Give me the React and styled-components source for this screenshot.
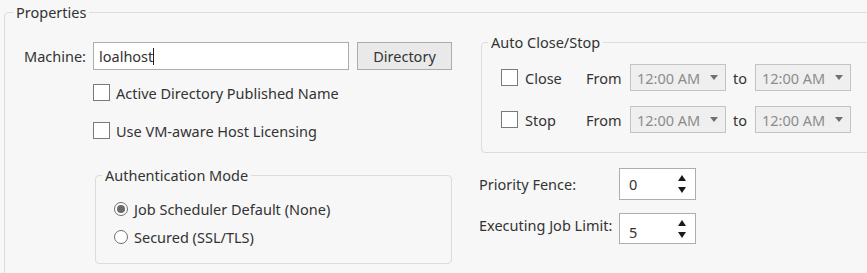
import React from 'react';
import styled, { createGlobalStyle } from 'styled-components';

const GlobalStyle = createGlobalStyle`
body {
  margin: 0;
  background: #f7f7f7;
  font-family: "Noto Sans", "Open Sans", sans-serif;
  font-size: 14.5px;
  color: #333;
  overflow: hidden;
}
`

const Page = styled.div`
  width: 867px;
  height: 273px;
  overflow: hidden;
  padding-top: 3px;
  box-sizing: border-box;
`

const Group = styled.fieldset`
  margin: ${p => p.margin || '0'};
  padding: ${p => p.pad || '0'};
  width: ${p => p.width || 'auto'};
  height: ${p => p.height || 'auto'};
  border: 1px solid #dcdcdc;
  border-radius: 4px;
  box-sizing: border-box;
  min-width: 0;
`

const Legend = styled.legend`
  margin-left: ${p => p.offset || 8}px;
  padding: 0 3px;
  line-height: 18px;
  color: #333;
`

const Columns = styled.div`
  display: flex;
`

const LeftCol = styled.div`
  width: 476px;
  padding-left: 19px;
  box-sizing: border-box;
`

const RightCol = styled.div`
  flex: 1;
  padding-top: 12px;
`

const MachineRow = styled.div`
  display: flex;
  align-items: center;
  margin-top: 21px;
`

const Label = styled.span`
  width: ${p => p.width || 'auto'};
  white-space: nowrap;
  margin-top: ${p => p.shift || 0}px;
`

const TextBox = styled.div`
  width: 256px;
  height: 28px;
  box-sizing: border-box;
  border: 1px solid #abadb3;
  background: #fff;
  display: flex;
  align-items: center;
  padding-left: 5px;
  margin-left: 6px;
`

const Caret = styled.span`
  display: inline-block;
  width: 1px;
  height: 17px;
  background: #222;
`

const Button = styled.div`
  width: 95px;
  height: 28px;
  box-sizing: border-box;
  margin-left: 8px;
  border: 1px solid #adadad;
  background: #e9e9e9;
  display: flex;
  align-items: center;
  justify-content: center;
`

const CheckRow = styled.label`
  display: flex;
  align-items: center;
  gap: 6px;
  margin-left: 69px;
  margin-top: ${p => p.top}px;
  height: 17px;
`

const Box = styled.span`
  width: 17px;
  height: 17px;
  box-sizing: border-box;
  border: 1px solid #7a7a7a;
  background: #fff;
  flex: none;
`

const AuthWrap = styled.div`
  margin: 27px 0 0 71px;
`

const RadioList = styled.div`
  display: flex;
  flex-direction: column;
  gap: 9px;
  padding: 15px 0 17px 18px;
`

const RadioRow = styled.div`
  display: flex;
  align-items: center;
  gap: 6px;
  height: 19px;
`

const Radio = styled.span`
  width: 14px;
  height: 14px;
  box-sizing: border-box;
  border-radius: 50%;
  border: 1px solid #6e6e6e;
  background: #fff;
  display: flex;
  align-items: center;
  justify-content: center;
  &::after {
    content: '';
    width: 8px;
    height: 8px;
    border-radius: 50%;
    background: ${p => (p.checked ? '#6a6a6a' : 'transparent')};
  }
`

const TimeGrid = styled.div`
  display: grid;
  grid-template-columns: 24px 61px 44px 96px 29px 96px;
  grid-auto-rows: 27px;
  row-gap: 15px;
  align-items: center;
  padding: 13px 0 19px 19px;
`

const Combo = styled.div`
  height: 27px;
  box-sizing: border-box;
  border: 1px solid #c3c3c3;
  background: #efefef;
  color: #8c8c8c;
  display: flex;
  align-items: center;
  justify-content: space-between;
  padding: 0 7px 0 6px;
`

const Arrow = styled.span`
  width: 0;
  height: 0;
  border-left: 4px solid transparent;
  border-right: 4px solid transparent;
  border-top: 5px solid #707070;
`

const To = styled.span`
  padding-left: 7px;
`

const SpinRow = styled.div`
  display: flex;
  align-items: center;
  margin-top: ${p => p.top}px;
  margin-left: -2px;
`

const Spin = styled.div`
  width: 77px;
  height: ${p => p.h}px;
  box-sizing: border-box;
  border: 1px solid #abadb3;
  background: #fff;
  display: flex;
  align-items: center;
  justify-content: space-between;
  padding: ${p => (p.low ? '6px' : '0')} 9px 0 9px;
`

const Arrows = styled.div`
  display: flex;
  flex-direction: column;
  gap: 6px;
  margin-top: ${p => (p.low ? '-6px' : '0')};
`

const Tri = styled.span`
  width: 0;
  height: 0;
  border-left: 4.5px solid transparent;
  border-right: 4.5px solid transparent;
  ${p => (p.up ? 'border-bottom: 6px solid #1a1a1a;' : 'border-top: 6px solid #1a1a1a;')}
`

const SpinBox = ({ value, h, low }) => (
  <Spin h={h} low={low}>
    <span>{value}</span>
    <Arrows low={low}>
      <Tri up />
      <Tri />
    </Arrows>
  </Spin>
)

const TimeRow = ({ name }) => (
  <>
    <Box />
    <span>{name}</span>
    <span>From</span>
    <Combo>12:00 AM<Arrow /></Combo>
    <To>to</To>
    <Combo>12:00 AM<Arrow /></Combo>
  </>
)

export default function App() {
  return (
    <Page>
      <GlobalStyle />
      <Group margin="0 0 0 4px" width="900px" height="320px">
        <Legend offset={8}>Properties</Legend>
        <Columns>
          <LeftCol>
            <MachineRow>
              <Label width="63px">Machine:</Label>
              <TextBox>loalhost<Caret /></TextBox>
              <Button>Directory</Button>
            </MachineRow>
            <CheckRow top={14}><Box />Active Directory Published Name</CheckRow>
            <CheckRow top={21}><Box />Use VM-aware Host Licensing</CheckRow>
            <AuthWrap>
              <Group width="357px">
                <Legend offset={6}>Authentication Mode</Legend>
                <RadioList>
                  <RadioRow><Radio checked />Job Scheduler Default (None)</RadioRow>
                  <RadioRow><Radio />Secured (SSL/TLS)</RadioRow>
                </RadioList>
              </Group>
            </AuthWrap>
          </LeftCol>
          <RightCol>
            <Group width="420px">
              <Legend offset={6}>Auto Close/Stop</Legend>
              <TimeGrid>
                <TimeRow name="Close" />
                <TimeRow name="Stop" />
              </TimeGrid>
            </Group>
            <SpinRow top={15}>
              <Label width="140px">Priority Fence:</Label>
              <SpinBox value="0" h={32} />
            </SpinRow>
            <SpinRow top={13}>
              <Label width="140px" shift={-8}>Executing Job Limit:</Label>
              <SpinBox value="5" h={31} low />
            </SpinRow>
          </RightCol>
        </Columns>
      </Group>
    </Page>
  );
}
